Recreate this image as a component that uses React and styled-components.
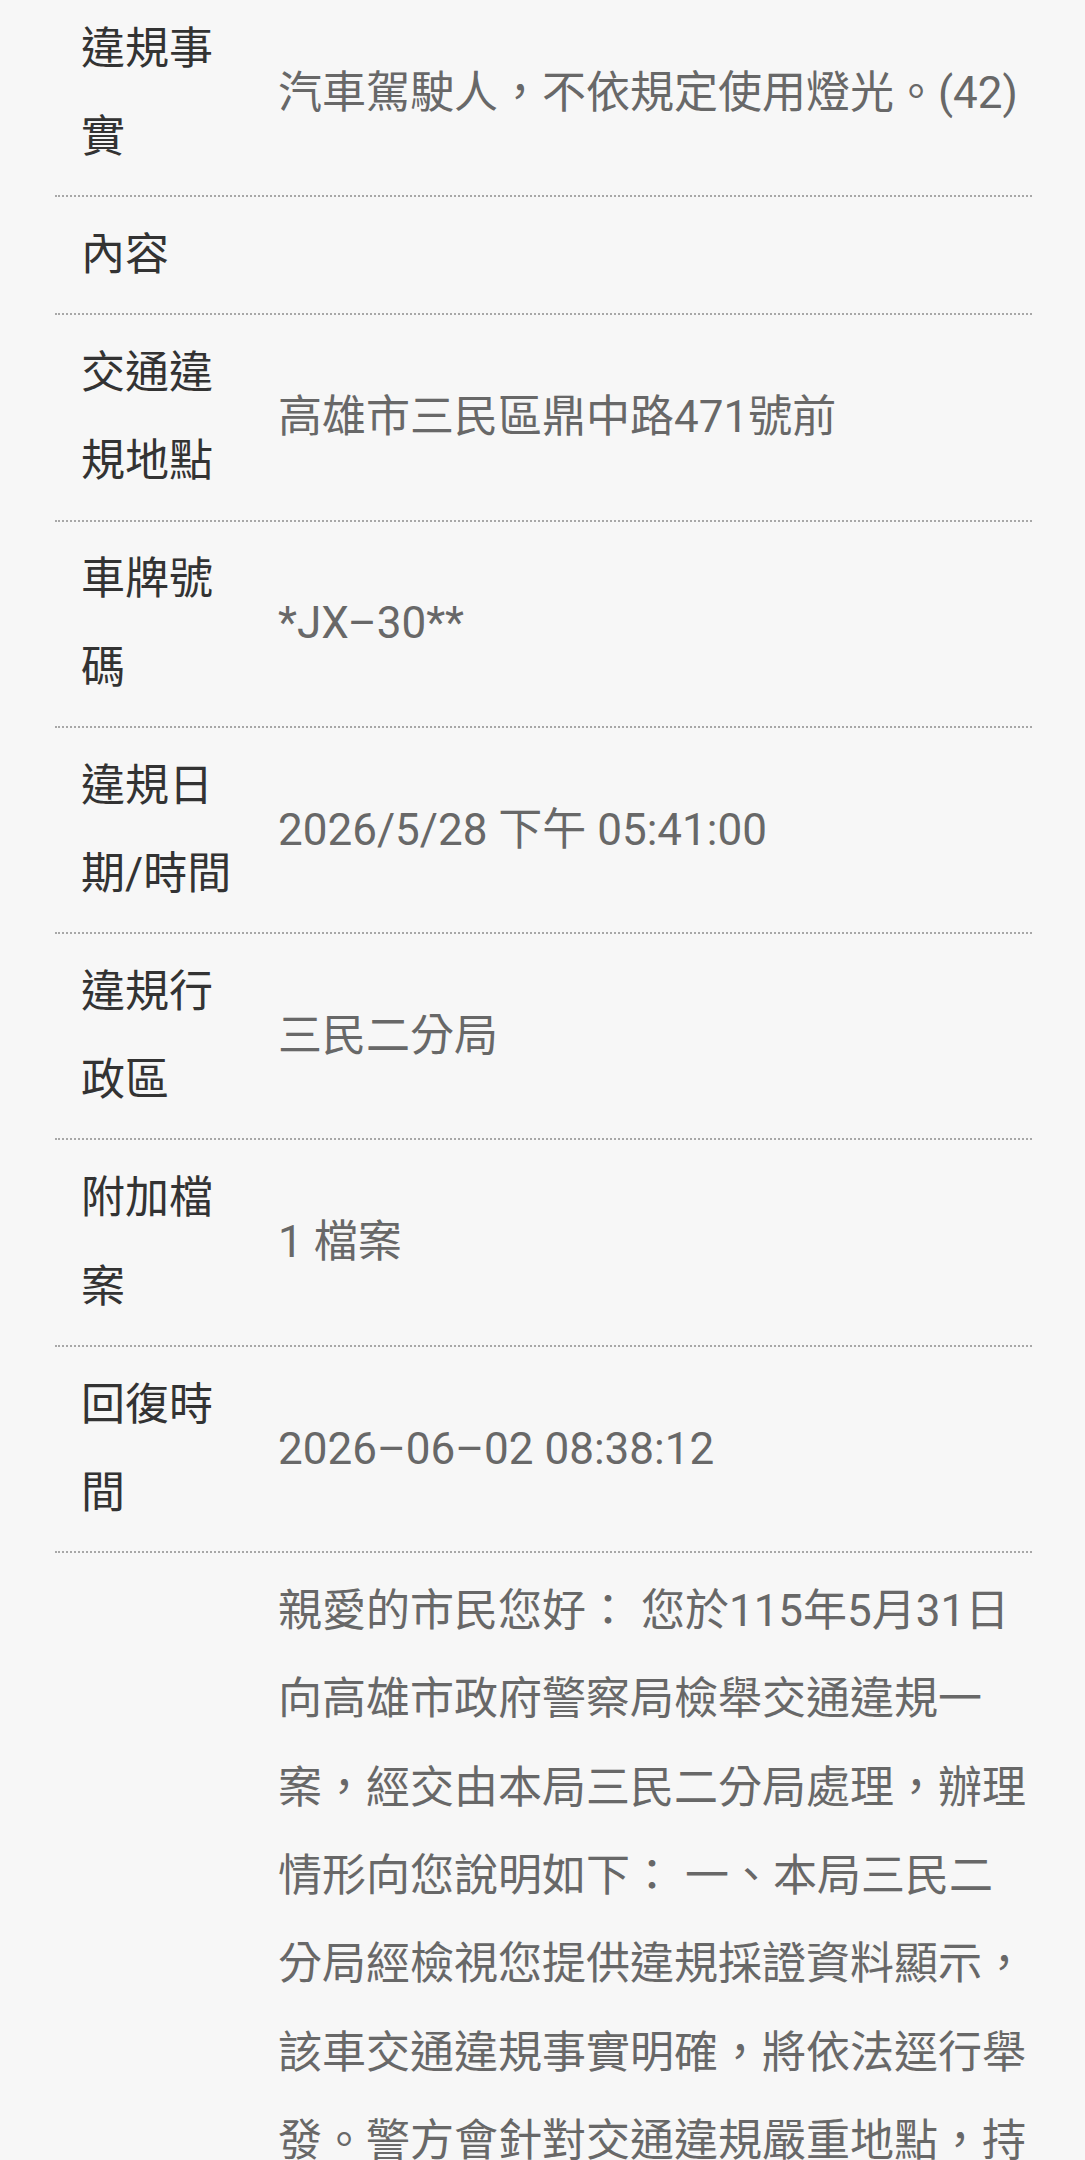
import React from 'react';
import styled, { createGlobalStyle } from 'styled-components';

const GlobalStyle = createGlobalStyle`
  html, body {
    margin: 0;
    padding: 0;
    background: #f7f7f7;
  }
  body {
    font-family: Roboto, "Noto Sans CJK TC", sans-serif;
  }
`;

const rows = [
	{ label: '違規事實', value: '汽車駕駛人，不依規定使用燈光。(42)' },
	{ label: '內容', value: '' },
	{ label: '交通違規地點', value: '高雄市三民區鼎中路471號前' },
	{ label: '車牌號碼', value: '*JX–30**' },
	{ label: '違規日期/時間', value: '2026/5/28 下午 05:41:00' },
	{ label: '違規行政區', value: '三民二分局' },
	{ label: '附加檔案', value: '1 檔案' },
	{ label: '回復時間', value: '2026–06–02 08:38:12' },
];

const reply =
	'親愛的市民您好： 您於115年5月31日向高雄市政府警察局檢舉交通違規一案，經交由本局三民二分局處理，辦理情形向您說明如下： 一、本局三民二分局經檢視您提供違規採證資料顯示，該車交通違規事實明確，將依法逕行舉發。警方會針對交通違規嚴重地點，持續加強執法取締，以維護用路人之安全。 二、感謝您對交通安全的關心與支持，如有其他問題，歡迎再與本局聯繫。';

const Page = () => {
	return (
		<>
			<GlobalStyle />
			<List>
				{rows.map((row) => (
					<Row key={row.label}>
						<Label>{row.label}</Label>
						<Value>{row.value}</Value>
					</Row>
				))}
				<Row>
					<Label />
					<Value top>{reply}</Value>
				</Row>
			</List>
		</>
	);
};

const List = styled.div`
margin: -9px 53px 0 55px;
`;

const Row = styled.div`
display: grid;
grid-template-columns: 193px 1fr;
border-bottom: 2px dotted #a8a8a8;
`;

const Label = styled.div`
padding: 13.75px 0 13.75px 26px;
font-size: 44px;
line-height: 88.4px;
color: #333333;
`;

const Value = styled.div`
display: flex;
align-items: ${(p) => (p.top ? 'flex-start' : 'center')};
padding: 13.75px 0 13.75px 30px;
font-size: 44px;
line-height: 88.4px;
color: #686868;
word-break: break-all;
`;

export default function App() {
	return <Page />;
}
